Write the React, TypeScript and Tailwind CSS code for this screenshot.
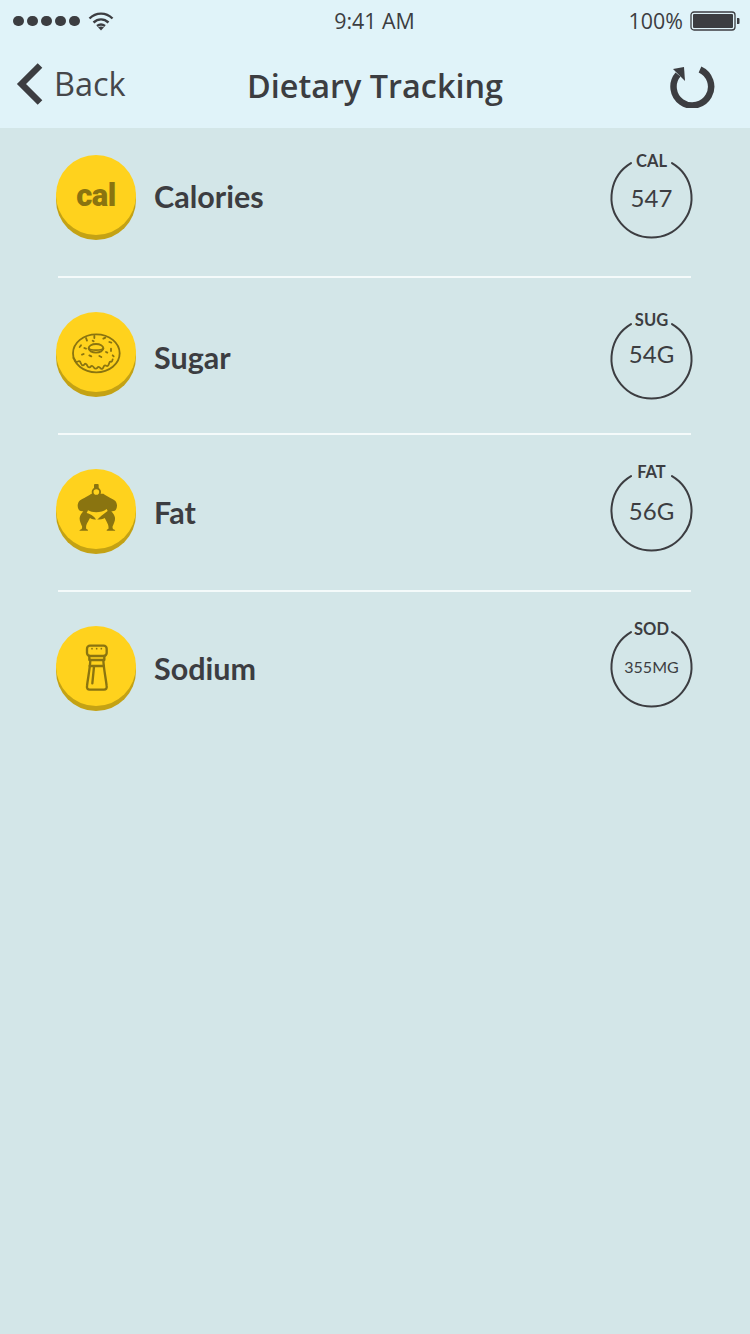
import React from "react";

const DARK = "#3c3d41";
const OLIVE = "#8a7410";

function Ring({ label, value, wrapClass, labelClass, valueClass }: { label: string; value: string; wrapClass: string; labelClass: string; valueClass: string }) {
  return (
    <div className={`relative h-[81px] w-[81px] shrink-0 font-['Lato',sans-serif] text-[#3c3d41] ${wrapClass}`}>
      <svg width="81" height="81" viewBox="0 0 81 81" fill="none" className="overflow-visible">
        <path d="M61 6.100A40 40 0 1 1 20 6.100" stroke={DARK} strokeWidth="2" strokeLinecap="round" />
      </svg>
      <span className={`absolute left-0 right-0 text-center text-[16.500px] leading-[18px] font-bold ${labelClass}`}>{label}</span>
      <span className={`absolute left-0 right-0 text-center leading-[30px] ${valueClass}`}>{value}</span>
    </div>
  );
}

function Donut() {
  return (
    <svg width="60" height="60" viewBox="0 0 180 180" fill="none" stroke={OLIVE} strokeWidth="5.500" strokeLinecap="round">
      <ellipse cx="91" cy="94" rx="70" ry="57" />
      <ellipse cx="90" cy="79" rx="22" ry="13" />
      <path d="M68 79c4 7 40 7 44 0" />
      <path d="M22 108c5 2 5 12 10 12s5-5 9-2 4 13 10 12 4-7 9-4 4 11 10 10 4-6 9-4 5 9 11 8 4-7 9-5 5 8 10 5 3-10 8-10 5 5 9 1 3-12 7-12 5 3 7-7" />
      <path d="M60 48l3 8M85 42v6M112 50l6-3M130 60l6 2M45 70l-4 5M60 80l-5-2M135 80v7M120 90l4 2M70 100l6 3M100 102l6 3M48 98l5-2M140 100l3 3M80 56l3 2" />
    </svg>
  );
}

function Sumo() {
  return (
    <svg width="60" height="60" viewBox="0 0 180 180">
      <rect x="84" y="15" width="14" height="16" rx="3" fill={OLIVE} />
      <path fill={OLIVE} d="M76 44C62 55 46 59 40 66c-6 8-7 18-1 27 3 3 8 4 13 4-5 6-10 12-11 19-1 9 3 17 7 26 1 4 0 7-2 9-3 1-5 2-6 4h26c0-3-2-4-5-5-2-7 0-15 5-22 2-4 4-8 6-11 8 6 34 6 44 0 2 3 4 7 6 11 4 7 7 15 5 22-3 1-5 2-5 5h26c-1-2-3-3-6-4-2-2-3-5-2-9 4-9 8-17 7-26-1-7-6-13-11-19 5 0 10-1 13-4 6-9 5-19-1-27-6-7-22-11-36-22z" />
      <circle cx="91" cy="39" r="14" fill={OLIVE} />
      <circle cx="91" cy="39" r="8.500" fill="#ffd21d" />
      <path d="M66 94c14 9 42 8 56-4l3 6c-12 9-24 17-34 29-3-11-15-19-29-23z" fill="#ffd21d" />
    </svg>
  );
}

function Shaker() {
  return (
    <svg width="60" height="60" viewBox="0 0 180 180" fill="none" stroke={OLIVE} strokeWidth="7" strokeLinejoin="round" strokeLinecap="round">
      <rect x="63" y="29" width="59" height="31" rx="9" />
      <path d="M70 60v12h45V60" />
      <path d="M73 72c-1 26-7 52-10 78-1 7 2 11 8 11h43c6 0 9-4 8-11-3-26-9-52-10-78" />
      <path d="M71 90h42M84 92l-5 50" />
      <circle cx="78" cy="38" r="2.500" fill={OLIVE} stroke="none" />
      <circle cx="92" cy="38" r="2.500" fill={OLIVE} stroke="none" />
      <circle cx="106" cy="38" r="2.500" fill={OLIVE} stroke="none" />
    </svg>
  );
}

function Coin({ children }: { children: React.ReactNode }) {
  return (
    <div className="flex h-[80px] w-[80px] shrink-0 items-center justify-center rounded-full bg-[#ffd21d] shadow-[0_5px_0_#c4a214]">
      {children}
    </div>
  );
}

function Divider() {
  return <div className="ml-[2px] h-[2px] bg-[#f4fafa]" />;
}

export default function App() {
  return (
    <div className="flex h-[1334px] w-[750px] flex-col overflow-hidden bg-[#d3e6e8] text-[#3c3d41]">
      <header className="flex h-[128px] shrink-0 flex-col bg-[#e0f3f9] font-['Open_Sans',sans-serif]">
        <div className="flex h-[42px] items-center justify-between pr-[10px] pl-[13px] text-[21.400px] text-[#3c3d41]">
          <div className="flex w-[240px] items-center gap-[8px]">
            <div className="flex gap-[3.600px]">
              {[0, 1, 2, 3, 4].map((i) => (
                <span key={i} className="h-[10.500px] w-[10.500px] rounded-full bg-[#3c3d41]" />
              ))}
            </div>
            <svg width="26" height="20" viewBox="0 0 26 20" fill="none" stroke={DARK} strokeWidth="2.400">
              <path d="M1.500 7.500c6.500-6.500 16.500-6.500 23 0" />
              <path d="M5.500 11.500c4.500-4.200 10.500-4.200 15 0" />
              <path d="M9 15c2.500-2 5.500-2 8 0" />
              <path d="M13 19.500l-3-3.300c2-1 4-1 6 0z" fill={DARK} stroke="none" />
            </svg>
          </div>
          <span className="ml-[-4px]">9:41 AM</span>
          <div className="flex w-[240px] items-center justify-end gap-[7px]">
            <span>100%</span>
            <svg width="50" height="20" viewBox="0 0 50 20" fill="none">
              <rect x="1" y="1" width="44" height="18" rx="3" stroke={DARK} strokeWidth="1.300" />
              <rect x="3" y="3" width="40" height="14" rx="1" fill={DARK} />
              <path d="M47 7h1.500a1 1 0 0 1 1 1v4a1 1 0 0 1-1 1H47z" fill={DARK} />
            </svg>
          </div>
        </div>
        <div className="relative flex flex-1 items-center justify-between pr-[35px] pl-[16px]">
          <div className="flex items-center gap-[11px]">
            <svg width="27" height="44" viewBox="0 0 27 44" fill="none" className="mt-[-2px]">
              <path d="M24 3.500L5.500 22 24 40.500" stroke={DARK} strokeWidth="6.500" />
            </svg>
            <span className="mt-[-2px] text-[32.500px] leading-[44px] text-[#45464a]">Back</span>
          </div>
          <h1 className="absolute left-0 right-0 mt-[-1px] text-center text-[32.400px] leading-[44px] font-semibold text-[#3c3d41]">Dietary Tracking</h1>
          <svg width="46" height="44" viewBox="0 0 46 44" fill="none" className="mt-[2px]">
            <path d="M31 5.500A18.800 18.800 0 1 1 9 10.500" stroke={DARK} strokeWidth="6.500" />
            <path d="M4 5L15 3l1 14z" fill={DARK} />
          </svg>
        </div>
      </header>

      <main className="flex flex-col pr-[59px] pl-[56px] font-['Lato',sans-serif]">
        <div className="flex h-[148px] items-start justify-between pt-[27px]">
          <div className="flex items-center gap-[18px]">
            <Coin><span className="font-['Roboto',sans-serif] text-[31px] leading-none font-black tracking-[-0.5px] text-[#8a7410]">cal</span></Coin>
            <span className="mt-[4px] text-[30.500px] font-bold">Calories</span>
          </div>
          <Ring label="CAL" value="547" wrapClass="mt-[2px] mr-[-1px]" labelClass="top-[-5px]" valueClass="top-[26px] text-[24px]" />
        </div>
        <Divider />
        <div className="flex h-[155px] items-start justify-between pt-[34px]">
          <div className="flex items-center gap-[18px]">
            <Coin><Donut /></Coin>
            <span className="mt-[12px] text-[30.500px] font-bold">Sugar</span>
          </div>
          <Ring label="SUG" value="54G" wrapClass="mt-[6px] mr-[-1px]" labelClass="top-[-7px]" valueClass="top-[21px] text-[24px]" />
        </div>
        <Divider />
        <div className="flex h-[155px] items-start justify-between pt-[34px]">
          <div className="flex items-center gap-[18px]">
            <Coin><Sumo /></Coin>
            <span className="mt-[8px] text-[30.500px] font-bold">Fat</span>
          </div>
          <Ring label="FAT" value="56G" wrapClass="mt-[1px] mr-[-1px]" labelClass="top-[-7px]" valueClass="top-[26px] text-[24px]" />
        </div>
        <Divider />
        <div className="flex h-[155px] items-start justify-between pt-[34px]">
          <div className="flex items-center gap-[18px]">
            <Coin><Shaker /></Coin>
            <span className="mt-[6px] text-[30.500px] font-bold">Sodium</span>
          </div>
          <Ring label="SOD" value="355MG" wrapClass="mr-[-1px]" labelClass="top-[-6px]" valueClass="top-[26px] text-[16px]" />
        </div>
      </main>
    </div>
  );
}
